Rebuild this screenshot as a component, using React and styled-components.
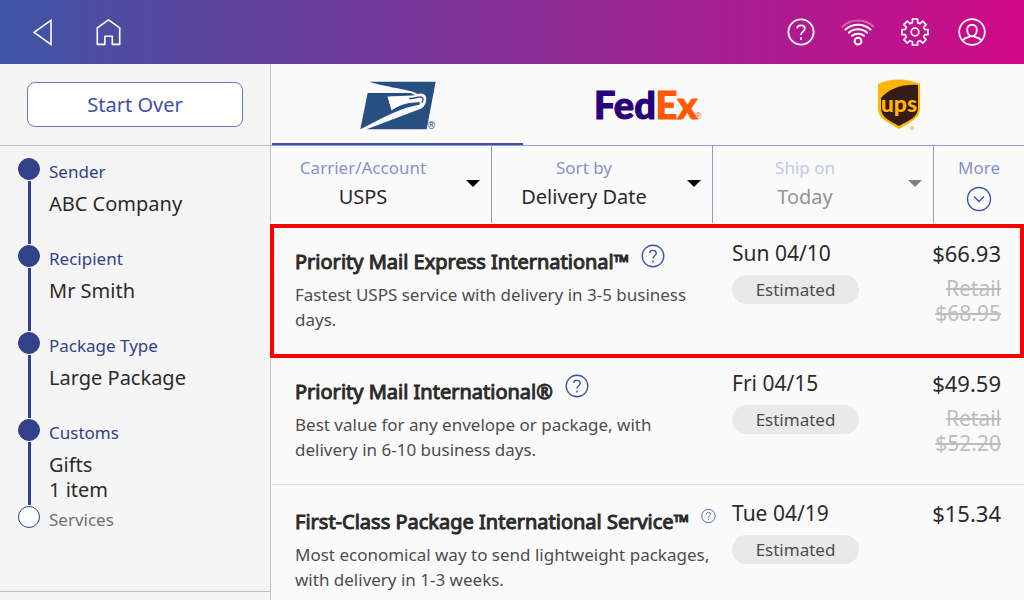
import React, { useState } from 'react';
import styled, { createGlobalStyle } from 'styled-components';

const GlobalStyle = createGlobalStyle`
  * {
    box-sizing: border-box;
  }

  body {
    margin: 0;
    background: #fafafa;
    color: #2b2b2b;
    font-family: 'Noto Sans', 'Open Sans', sans-serif;
    font-size: 20px;
    line-height: 25px;
  }

  button,
  select {
    font: inherit;
    color: inherit;
    border: 0;
    padding: 0;
    background: none;
    cursor: pointer;
  }

  svg {
    display: block;
  }
`;

const Page = styled.div`
  height: 100vh;
  display: flex;
  flex-direction: column;
`;

const TopBar = styled.header`
  flex: none;
  height: 64px;
  padding: 0 24px 0 10px;
  display: flex;
  justify-content: space-between;
  background: linear-gradient(90deg, #3e55a5, #d00888);
`;

const TopGroup = styled.div`
  display: flex;
`;

const TopButton = styled.button`
  width: ${props => (props.$wide ? '65px' : '57px')};
  display: flex;
  align-items: center;
  justify-content: center;
  color: #fff;
`;

const Content = styled.div`
  flex: 1;
  min-height: 0;
  display: flex;
`;

const Sidebar = styled.aside`
  flex: none;
  width: 271px;
  display: flex;
  flex-direction: column;
  background: #f5f5f5;
  border-right: 1px solid #bdbdbd;
`;

const SidebarTop = styled.div`
  padding: 18px 27px;
  border-bottom: 1px solid #bdbdbd;
`;

const StartOver = styled.button`
  width: 100%;
  height: 45px;
  border: 1px solid #6676bd;
  border-radius: 8px;
  background: #fff;
  color: #3f51a5;
`;

const Steps = styled.ol`
  flex: 1;
  margin: 0;
  padding: 12px 18px 0;
  list-style: none;
`;

const Step = styled.li`
  min-height: 87px;
  display: flex;
  gap: 9px;

  &:last-child {
    min-height: 0;
  }
`;

const Track = styled.div`
  width: 22px;
  display: flex;
  flex-direction: column;
  align-items: center;
`;

const Dot = styled.span`
  width: 22px;
  height: 22px;
  border-radius: 50%;
  border: 1px solid #31418a;
  background: ${props => (props.$done ? '#31418a' : '#fff')};
`;

const Line = styled.span`
  flex: 1;
  width: 3px;
  margin: 1px 0;
  background: #31418a;
`;

const StepText = styled.div`
  padding-top: 1px;
`;

const StepLabel = styled.div`
  font-size: 17px;
  color: ${props => (props.$done ? '#31418a' : '#707070')};
`;

const StepValues = styled.div`
  padding-top: 7px;
`;

const SidebarBottom = styled.div`
  height: 9px;
  border-top: 1px solid #bdbdbd;
`;

const Main = styled.main`
  flex: 1;
  min-width: 0;
  display: flex;
  flex-direction: column;
`;

const Carriers = styled.nav`
  flex: none;
  height: 82px;
  padding-left: 1px;
  display: grid;
  grid-template-columns: repeat(3, 1fr);
  border-bottom: 1px solid #8f9ace;
`;

const CarrierTab = styled.button`
  display: flex;
  align-items: center;
  justify-content: center;
  border-top: 2px solid transparent;
  border-bottom: 2px solid ${props => (props.$active ? '#3f51a5' : 'transparent')};
`;

const Filters = styled.div`
  flex: none;
  margin-bottom: 2px;
  display: grid;
  grid-template-columns: repeat(3, minmax(0, 1fr)) 90px;
`;

const Filter = styled.label`
  display: grid;
  grid-template-columns: 1fr 14px;
  column-gap: 22px;
  align-items: center;
  padding: 9px 11px 14px;
  border-right: 1px solid #8f9ace;
`;

const FilterText = styled.span`
  display: flex;
  flex-direction: column;
  gap: 4px;
  text-align: center;
`;

const FilterLabel = styled.span`
  font-size: 17px;
  color: ${props => (props.$disabled ? '#c3c9e6' : '#8592ca')};
`;

const FilterSelect = styled.select`
  appearance: none;
  width: 100%;
  height: 25px;
  text-align: center;
  text-align-last: center;

  &:disabled {
    color: #959595;
    opacity: 1;
  }
`;

const Caret = styled.span`
  margin-top: 3px;
  border: 7px solid transparent;
  border-top-color: ${props => (props.$disabled ? '#808080' : '#000')};
  border-bottom: 0;
`;

const More = styled.button`
  display: flex;
  flex-direction: column;
  align-items: center;
  gap: 6px;
  padding-top: 9px;
  color: #3f51a5;
`;

const Services = styled.ul`
  flex: 1;
  min-height: 0;
  margin: -2px 0 0 -3px;
  padding: 2px 0 0 4px;
  list-style: none;
  overflow-y: auto;
  scrollbar-width: none;
`;

const Service = styled.li`
  position: relative;
  display: grid;
  grid-template-columns: minmax(0, 1fr) 179px 90px;
  min-height: 130px;
  padding: 16px 23px 20px;
  border-bottom: 1px solid #dadada;

  ${props =>
    props.$highlighted &&
    `
    &::after {
      content: '';
      position: absolute;
      inset: -1px 0 -4px -2px;
      border: 4px solid #f00;
      box-shadow: 0 0 0 1px #fff;
      pointer-events: none;
    }
  `}
`;

const TitleRow = styled.div`
  height: 33px;
  display: flex;
  align-items: flex-end;
  gap: 12px;
  margin-bottom: 8px;
  padding-right: 16px;
`;

const Title = styled.h2`
  flex: none;
  margin: 0;
  font-size: 20px;
  font-weight: 400;
  line-height: 25px;
  -webkit-text-stroke: 1px currentColor;
`;

const HelpButton = styled.button`
  flex: 0 1 24px;
  min-width: 12px;
  height: 24px;
  margin-bottom: 6px;
  display: flex;
  align-items: center;
  color: #3f51a5;

  svg {
    width: 100%;
  }
`;

const Description = styled.p`
  margin: 0;
  padding-right: 16px;
  font-size: 17px;
  color: #4d4d4d;
`;

const DeliveryDate = styled.div`
  font-size: 21px;
`;

const Badge = styled.div`
  width: 127px;
  margin-top: 9px;
  border-radius: 15px;
  background: #e9e9e9;
  font-size: 17px;
  line-height: 29px;
  text-align: center;
  color: #4d4d4d;
`;

const Price = styled.div`
  font-size: 22px;
  text-align: right;
`;

const Retail = styled.s`
  display: block;
  margin-top: 10px;
  font-size: 21px;
  color: #bdbdbd;
`;

const HelpIcon = ({ size, thickness }) => (
  <svg width={size} height={size} viewBox="0 0 28 28" fill="none" stroke="currentColor" strokeWidth={thickness}>
    <circle cx="14" cy="14" r="12.6" />
    <path d="M10.2 10.6c0-2 1.6-3.2 3.8-3.2s3.8 1.3 3.8 3.3c0 3-3.8 2.9-3.8 6.3" />
    <path d="M14 19.3v2.4" />
  </svg>
);

const BackIcon = () => (
  <svg width="22" height="28" viewBox="0 0 22 28" fill="none" stroke="currentColor" strokeWidth="1.6">
    <path d="M2 14.3 19 2.4v24z" />
  </svg>
);

const HomeIcon = () => (
  <svg width="26" height="28" viewBox="0 0 26 28" fill="none" stroke="currentColor" strokeWidth="1.6">
    <path d="M2.3 9.8 13.500 1.800l11.200 8v16.600h-7.400v-8.200H9.900v8.200H2.300z" strokeLinejoin="round" />
  </svg>
);

const WifiIcon = () => (
  <svg width="34" height="28" viewBox="0 0 34 28" fill="none" stroke="currentColor" strokeWidth="2" strokeLinecap="round">
    <path d="M1.5 8.5c8.5-8 22.5-8 31 0" opacity=".35" />
    <path d="M4.5 11.5c7-6.400 18-6.400 25 0" />
    <path d="M7.800 14.700c5.200-4.600 13.200-4.600 18.400 0" />
    <path d="M11 17.800c3.400-2.900 8.600-2.900 12 0" />
    <circle cx="17" cy="23.200" r="3.400" />
  </svg>
);

const GearIcon = () => (
  <svg width="28" height="28" viewBox="0 0 28 28" fill="none" stroke="currentColor" strokeWidth="1.7" strokeLinejoin="round">
    <path d="M11.400 1h5.200v3.600l2.500 1 2.600-2.500 3.500 3.600-2.500 2.500 1 2.300H27v5.100h-3.300l-1 2.500 2.500 2.500-3.500 3.600-2.600-2.500-2.500 1V27h-5.200v-3.300l-2.500-1-2.600 2.500-3.500-3.600 2.500-2.500-1-2.500H1v-5.100h3.300l1-2.300-2.500-2.500 3.500-3.600 2.600 2.500 2.500-1z" />
    <circle cx="14" cy="14" r="3.800" />
  </svg>
);

const UserIcon = () => (
  <svg width="28" height="28" viewBox="0 0 28 28" fill="none" stroke="currentColor" strokeWidth="1.7">
    <circle cx="14" cy="14" r="12.800" />
    <path d="M14 6.800c-3 0-4.800 2-4.800 5 0 2.300.7 4.300 2.300 5.500v1.500c-3.400.5-5.500 1.800-7 3.600M14 6.800c3 0 4.800 2 4.800 5 0 2.300-.7 4.300-2.300 5.500v1.500c3.400.5 5.500 1.800 7 3.600M11.500 17.300c1.500 1.200 3.500 1.200 5 0" />
  </svg>
);

const MoreIcon = () => (
  <svg width="26" height="26" viewBox="0 0 26 26" fill="none" stroke="currentColor" strokeWidth="1.4">
    <circle cx="13" cy="13" r="11.5" />
    <path d="M8 10.5l5 5 5-5" />
  </svg>
);

const UspsLogo = () => (
  <svg width="78" height="50" viewBox="54 40 234 150" role="img" aria-label="USPS">
    <path
      fill="#284f81"
      d="M88 45H287L260 188H80L242 126C255 121 261 103 258 90C254 80 243 79 232 82C222 70 150 64 88 45Z"
    />
    <path fill="#284f81" d="M83 79H212L226 86L143 90L155 131C178 113 210 106 241 107L238 114C190 121 130 151 61 188Z" />
    <path fill="#fff" d="M143 90L232 87L250 92L243 106C210 104 178 112 155 131Z" />
    <path fill="none" stroke="#284f81" strokeWidth="4" d="M207 95C220 98 228 91 238 91C250 90 252 97 246 108" />
    <text x="263" y="187" fontFamily="Liberation Sans" fontSize="30" fill="#284f81">
      ®
    </text>
  </svg>
);

const FedexLogo = () => (
  <svg width="108" height="52" viewBox="0 0 108 52" role="img" aria-label="FedEx">
    <text y="40" fontFamily="Lato" fontWeight="900" fontSize="38" strokeWidth="1">
      <tspan fill="#2a007c" stroke="#2a007c">
        Fed
      </tspan>
      <tspan fill="#ff5a00" stroke="#ff5a00">
        Ex
      </tspan>
    </text>
    <text x="101" y="40" fontFamily="Liberation Sans" fontSize="9" fill="#ff5a00">
      ®
    </text>
  </svg>
);

const UpsLogo = () => (
  <svg width="44" height="52" viewBox="0 0 44 52" role="img" aria-label="UPS">
    <path fill="#ffb406" d="M1 5C13-1 31-1 43 5V29C43 40 33 43 22 50C11 43 1 40 1 29Z" />
    <path fill="#351c15" d="M4 19C13 9 26 5 41 6V29C41 38 33 41 22 47C11 41 4 38 4 29Z" />
    <text x="22" y="33" textAnchor="middle" fontFamily="Lato" fontWeight="900" fontSize="23" fill="#ffb406">
      ups
    </text>
    <circle cx="35" cy="49" r="1.5" fill="none" stroke="#ffb406" />
  </svg>
);

const steps = [
  { label: 'Sender', values: ['ABC Company'], done: true },
  { label: 'Recipient', values: ['Mr Smith'], done: true },
  { label: 'Package Type', values: ['Large Package'], done: true },
  { label: 'Customs', values: ['Gifts', '1 item'], done: true },
  { label: 'Services', values: [], done: false },
];

const carriers = [
  { id: 'usps', Logo: UspsLogo },
  { id: 'fedex', Logo: FedexLogo },
  { id: 'ups', Logo: UpsLogo },
];

const filters = [
  { label: 'Carrier/Account', value: 'USPS' },
  { label: 'Sort by', value: 'Delivery Date' },
  { label: 'Ship on', value: 'Today', disabled: true },
];

const services = [
  {
    title: 'Priority Mail Express International™',
    description: 'Fastest USPS service with delivery in 3-5 business days.',
    date: 'Sun 04/10',
    price: '$66.93',
    retail: '$68.95',
    highlighted: true,
  },
  {
    title: 'Priority Mail International®',
    description: 'Best value for any envelope or package, with delivery in 6-10 business days.',
    date: 'Fri 04/15',
    price: '$49.59',
    retail: '$52.20',
  },
  {
    title: 'First-Class Package International Service™',
    description: 'Most economical way to send lightweight packages, with delivery in 1-3 weeks.',
    date: 'Tue 04/19',
    price: '$15.34',
  },
];

const StepItem = ({ label, values, done }) => (
  <Step>
    <Track>
      <Dot $done={done} />
      {done && <Line />}
    </Track>
    <StepText>
      <StepLabel $done={done}>{label}</StepLabel>
      {values.length > 0 && (
        <StepValues>
          {values.map(value => (
            <div key={value}>{value}</div>
          ))}
        </StepValues>
      )}
    </StepText>
  </Step>
);

const FilterItem = ({ label, value, disabled }) => (
  <Filter>
    <FilterText>
      <FilterLabel $disabled={disabled}>{label}</FilterLabel>
      <FilterSelect disabled={disabled} defaultValue={value}>
        <option>{value}</option>
      </FilterSelect>
    </FilterText>
    <Caret $disabled={disabled} />
  </Filter>
);

const ServiceItem = ({ title, description, date, price, retail, highlighted }) => (
  <Service $highlighted={highlighted}>
    <div>
      <TitleRow>
        <Title>{title}</Title>
        <HelpButton aria-label={`About ${title}`}>
          <HelpIcon size={24} thickness={1.6} />
        </HelpButton>
      </TitleRow>
      <Description>{description}</Description>
    </div>
    <div>
      <DeliveryDate>{date}</DeliveryDate>
      <Badge>Estimated</Badge>
    </div>
    <Price>
      {price}
      {retail && (
        <Retail>
          Retail
          <br />
          {retail}
        </Retail>
      )}
    </Price>
  </Service>
);

const App = () => {
  const [carrier, setCarrier] = useState('usps');

  return (
    <Page>
      <GlobalStyle />
      <TopBar>
        <TopGroup>
          <TopButton $wide aria-label="Back">
            <BackIcon />
          </TopButton>
          <TopButton $wide aria-label="Home">
            <HomeIcon />
          </TopButton>
        </TopGroup>
        <TopGroup>
          <TopButton aria-label="Help">
            <HelpIcon size={28} thickness={1.8} />
          </TopButton>
          <TopButton aria-label="Network">
            <WifiIcon />
          </TopButton>
          <TopButton aria-label="Settings">
            <GearIcon />
          </TopButton>
          <TopButton aria-label="Account">
            <UserIcon />
          </TopButton>
        </TopGroup>
      </TopBar>
      <Content>
        <Sidebar>
          <SidebarTop>
            <StartOver>Start Over</StartOver>
          </SidebarTop>
          <Steps>
            {steps.map(step => (
              <StepItem key={step.label} {...step} />
            ))}
          </Steps>
          <SidebarBottom />
        </Sidebar>
        <Main>
          <Carriers>
            {carriers.map(({ id, Logo }) => (
              <CarrierTab key={id} $active={id === carrier} onClick={() => setCarrier(id)}>
                <Logo />
              </CarrierTab>
            ))}
          </Carriers>
          <Filters>
            {filters.map(filter => (
              <FilterItem key={filter.label} {...filter} />
            ))}
            <More>
              <FilterLabel>More</FilterLabel>
              <MoreIcon />
            </More>
          </Filters>
          <Services>
            {services.map(service => (
              <ServiceItem key={service.title} {...service} />
            ))}
          </Services>
        </Main>
      </Content>
    </Page>
  );
};

export default App;
